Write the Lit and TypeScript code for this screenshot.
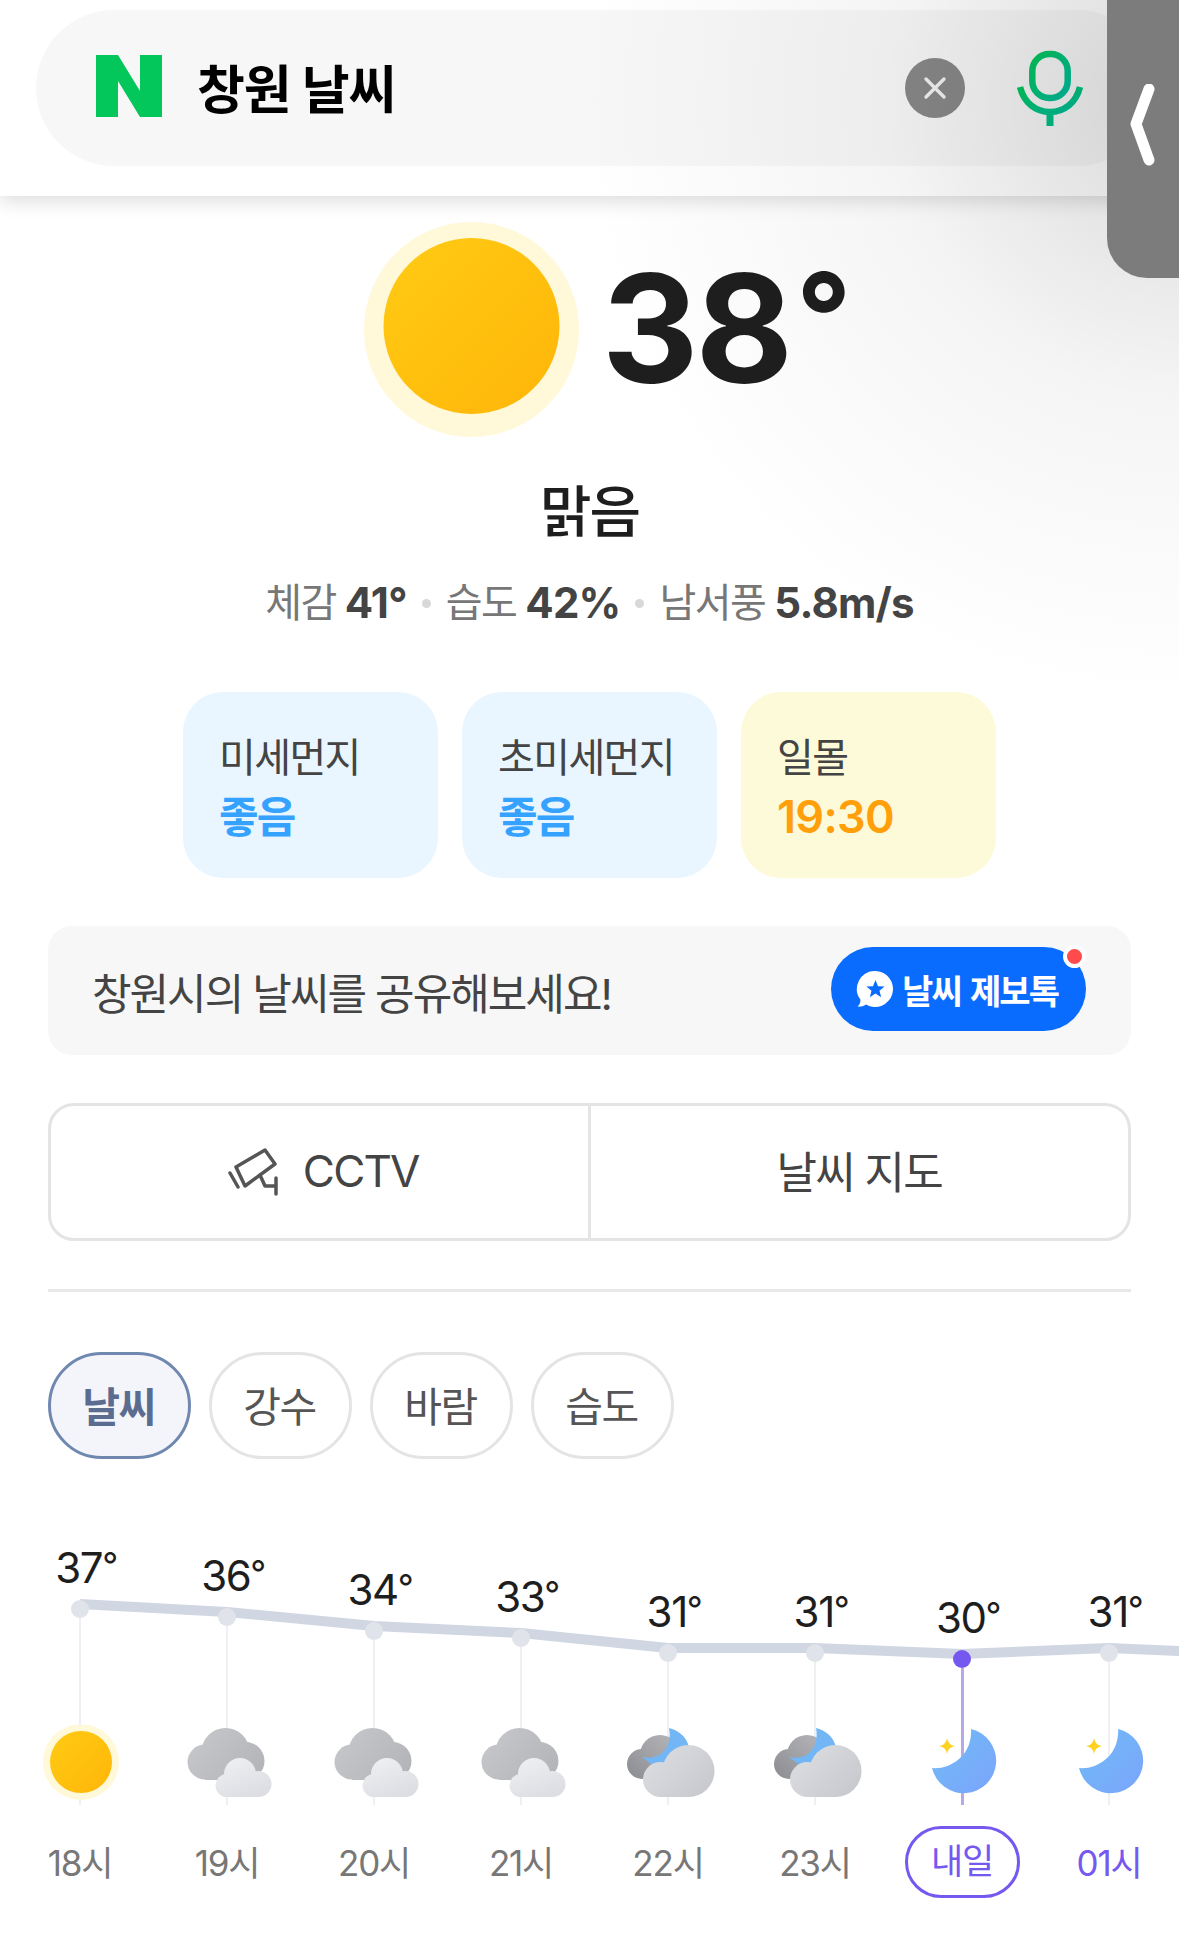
import { LitElement, html, svg, css } from 'lit';
import { customElement } from 'lit/decorators.js';

type Hour = { temp: string; y: number; icon: 'sun' | 'cloud' | 'cloudMoon' | 'moon'; label: string };

// y = centre of the dot from the top of the plot
const hours: Hour[] = [
  { temp: '37', y: 79, icon: 'sun', label: '18시' },
  { temp: '36', y: 87, icon: 'cloud', label: '19시' },
  { temp: '34', y: 101, icon: 'cloud', label: '20시' },
  { temp: '33', y: 108, icon: 'cloud', label: '21시' },
  { temp: '31', y: 123, icon: 'cloudMoon', label: '22시' },
  { temp: '31', y: 123, icon: 'cloudMoon', label: '23시' },
  { temp: '30', y: 129, icon: 'moon', label: '내일' },
  { temp: '31', y: 123, icon: 'moon', label: '01시' },
];

const COL = 147;
const FIRST = 80;

const defs = svg`
  <linearGradient id="gSun" x1="0" y1="0" x2="1" y2="1">
    <stop offset="0" stop-color="#ffcb14" /><stop offset="1" stop-color="#ffb508" />
  </linearGradient>
  <linearGradient id="gBig" gradientUnits="userSpaceOnUse" x1="-30" y1="5" x2="35" y2="55">
    <stop offset="0" stop-color="#c6c7ca" /><stop offset="1" stop-color="#b2b3b7" />
  </linearGradient>
  <linearGradient id="gSmall" gradientUnits="userSpaceOnUse" x1="5" y1="33" x2="20" y2="72">
    <stop offset="0" stop-color="#eeeff2" /><stop offset="1" stop-color="#dcdee3" />
  </linearGradient>
  <linearGradient id="gDark" gradientUnits="userSpaceOnUse" x1="5" y1="10" x2="-35" y2="54">
    <stop offset="0" stop-color="#b4b4b8" /><stop offset="1" stop-color="#8e8f94" />
  </linearGradient>
  <linearGradient id="gFront" gradientUnits="userSpaceOnUse" x1="-5" y1="25" x2="40" y2="70">
    <stop offset="0" stop-color="#dadbdf" /><stop offset="1" stop-color="#c7c8cd" />
  </linearGradient>
  <linearGradient id="gMoon" x1="0" y1="0" x2="1" y2="1">
    <stop offset="0" stop-color="#70bcf5" /><stop offset="1" stop-color="#7ba4fc" />
  </linearGradient>
  <linearGradient id="gMic" x1="0" y1="0" x2="1" y2="1">
    <stop offset="0" stop-color="#03c75a" /><stop offset="1" stop-color="#00bd9f" />
  </linearGradient>
`;

const iconParts = {
  sun: svg`
    <circle cx="1" cy="37" r="38" fill="#fff8d9" />
    <circle cx="1" cy="37" r="31" fill="url(#gSun)" />
  `,
  cloud: svg`
    <g fill="url(#gBig)">
      <circle cx="-22" cy="37" r="17.5" />
      <circle cx="-1.5" cy="27" r="24" />
      <circle cx="18.5" cy="36" r="19" />
      <rect x="-22" y="30" width="40" height="25" />
    </g>
    <g fill="url(#gSmall)">
      <circle cx="13" cy="49" r="16" />
      <circle cx="0" cy="60.5" r="11.5" />
      <circle cx="31.5" cy="59" r="13" />
      <rect x="0" y="58" width="32" height="14" />
    </g>
  `,
  cloudMoon: svg`
    <g fill="url(#gDark)">
      <circle cx="-26" cy="39" r="15" />
      <circle cx="-8" cy="30" r="20" />
    </g>
    <path d="M1 3C14 6 23 17 21 30L10 50L-10 44L-26 32C-10 36 5 25 1 3Z" fill="#72b6f6" />
    <g fill="url(#gFront)">
      <circle cx="-7.5" cy="54.5" r="17.5" />
      <circle cx="20.5" cy="46" r="26" />
      <rect x="-7.5" y="50" width="28" height="22" />
    </g>
  `,
  moon: svg`
    <path d="M9 4A32.5 32.5 0 1 1 -30 43A36 36 0 0 0 9 4Z" fill="url(#gMoon)" />
    <path d="M-15 13Q-14 20 -7 21Q-14 22 -15 29Q-16 22 -23 21Q-16 20 -15 13Z" fill="#ffd21f" />
  `,
};

@customElement('app-root')
export class AppRoot extends LitElement {
  static styles = css`
    :host {
      display: block;
      position: relative;
      height: 1952px;
      overflow: hidden;
      background: #fff;
      font-family: Inter, 'Noto Sans CJK KR', sans-serif;
      color: #1e1e1e;
    }
    .defs {
      position: absolute;
      width: 0;
      height: 0;
    }
    .dim {
      position: absolute;
      inset: 0;
      z-index: 5;
      pointer-events: none;
      background: radial-gradient(circle 600px at 100% 100px, rgba(0, 0, 0, 0.15), rgba(0, 0, 0, 0.04) 50%, rgba(0, 0, 0, 0) 100%);
    }
    .handle {
      position: absolute;
      top: 0;
      right: 0;
      width: 72px;
      height: 278px;
      z-index: 6;
      background: #7c7c7c;
      border-bottom-left-radius: 40px;
    }
    .handle svg {
      display: block;
      margin: 84px 0 0 21px;
    }
    header {
      position: relative;
      z-index: 2;
      height: 196px;
      box-sizing: border-box;
      padding: 10px 24px 30px 36px;
      background: #fff;
      box-shadow: 0 5px 18px rgba(0, 0, 0, 0.14);
    }
    .search {
      height: 156px;
      border-radius: 78px;
      background: #f7f7f7;
      display: flex;
      align-items: center;
      padding-left: 60px;
    }
    .logo {
      margin-bottom: 4px;
    }
    .search h1 {
      margin: 0 0 4px 35px;
      font-size: 52px;
      font-weight: 700;
      letter-spacing: -1.1px;
      color: #000;
      flex: 1;
    }
    .clear {
      width: 60px;
      height: 60px;
      border-radius: 50%;
      background: #888;
      display: flex;
      align-items: center;
      justify-content: center;
    }
    .mic {
      margin: 0 71px 0 51px;
      display: block;
    }
    .hero {
      display: flex;
      justify-content: center;
      padding: 26px 0 0 33px;
      gap: 23px;
      height: 215px;
    }
    .big {
      font-size: 150px;
      line-height: 1;
      font-weight: 700;
      letter-spacing: -3px;
      margin-top: 32px;
      height: 150px;
    }
    .big span {
      font-size: 120px;
      line-height: 0;
      vertical-align: 24px;
      margin-left: 6px;
    }
    .status {
      margin-top: 40px;
      text-align: center;
      font-size: 56px;
      line-height: 70px;
      font-weight: 500;
      letter-spacing: -2px;
    }
    .facts {
      margin-top: 26px;
      display: flex;
      justify-content: center;
      align-items: center;
      font-size: 40px;
      line-height: 60px;
      color: #777;
      letter-spacing: -1.5px;
    }
    .facts b {
      color: #444;
      font-size: 42px;
      font-weight: 700;
      margin-left: 9px;
      letter-spacing: -0.8px;
    }
    .facts i {
      width: 9px;
      height: 9px;
      border-radius: 50%;
      background: #d8d8d8;
      margin: 0 15px;
    }
    .cards {
      margin-top: 59px;
      display: flex;
      justify-content: center;
      gap: 24px;
    }
    .card {
      width: 255px;
      height: 186px;
      box-sizing: border-box;
      padding: 41px 0 0 36px;
      border-radius: 40px;
      background: #e9f6ff;
      font-size: 40px;
      line-height: 50px;
      letter-spacing: -1.6px;
      color: #444;
    }
    .card.warm {
      background: #fdfad9;
    }
    .card b {
      display: block;
      margin-top: 9px;
      font-size: 43px;
      font-weight: 600;
      color: #36a2ff;
      letter-spacing: -1.8px;
    }
    .card.warm b {
      color: #ff9f0a;
      font-size: 45px;
      letter-spacing: -0.7px;
    }
    .banner {
      position: relative;
      margin: 48px 48px 0;
      height: 129px;
      box-sizing: border-box;
      padding: 0 45px 0 44px;
      border-radius: 24px;
      background: #f7f7f7;
      display: flex;
      align-items: center;
      justify-content: space-between;
      font-size: 43px;
      letter-spacing: -2px;
      color: #444;
    }
    .report {
      position: relative;
      width: 255px;
      height: 84px;
      margin-bottom: 3px;
      border-radius: 42px;
      background: #0a6cff;
      display: flex;
      align-items: center;
      box-sizing: border-box;
      padding-left: 25px;
      gap: 8px;
      font-size: 34px;
      font-weight: 700;
      letter-spacing: -1.9px;
      word-spacing: 3px;
      color: #fff;
    }
    .report::after {
      content: '';
      position: absolute;
      top: -2px;
      right: 0;
      width: 15px;
      height: 15px;
      border-radius: 50%;
      background: #ff4b4b;
      border: 4.5px solid #fdfdfd;
    }
    .links {
      margin: 48px 48px 0;
      height: 138px;
      box-sizing: border-box;
      border: 3px solid #e4e4e4;
      border-radius: 26px;
      display: grid;
      grid-template-columns: calc(50% + 1px) 1fr;
      font-size: 44px;
      letter-spacing: -1.8px;
      color: #444;
    }
    .links div {
      display: flex;
      align-items: center;
      justify-content: center;
      gap: 24px;
      padding-bottom: 4px;
    }
    .links div:first-child {
      border-right: 3px solid #e4e4e4;
      padding: 0 0 2px 5px;
    }
    .rule {
      margin: 48px 48px 0;
      height: 3px;
      background: #e8e8e8;
    }
    .tabs {
      margin: 60px 0 0 48px;
      display: flex;
      gap: 18px;
    }
    .tab {
      width: 143px;
      height: 107px;
      box-sizing: border-box;
      border: 3px solid #e4e4e4;
      border-radius: 54px;
      padding: 0 2px 3px 0;
      display: flex;
      align-items: center;
      justify-content: center;
      font-size: 41px;
      letter-spacing: -1.5px;
      color: #555;
    }
    .tab.on {
      border-color: #7088b0;
      background: #f3f5fa;
      color: #5a6c8f;
      font-weight: 700;
    }
    .plot {
      position: relative;
      margin-top: 71px;
      height: 275px;
    }
    .line {
      position: absolute;
      left: 0;
      top: 0;
    }
    .cols,
    .labels {
      position: relative;
      display: flex;
      padding-left: 6.5px;
      width: 1300px;
    }
    .cols {
      height: 275px;
    }
    .col {
      position: relative;
      width: 147px;
      flex: none;
      display: flex;
      flex-direction: column;
      align-items: center;
    }
    .temp {
      height: 50px;
      line-height: 50px;
      padding-left: 12px;
      font-size: 42px;
      letter-spacing: -1.4px;
      white-space: nowrap;
    }
    .temp span {
      font-size: 35px;
      line-height: 0;
      vertical-align: 5px;
    }
    .dot {
      width: 18px;
      height: 18px;
      margin-top: 7px;
      flex: none;
      border-radius: 50%;
      background: #e0e3ea;
    }
    .stem {
      width: 2px;
      flex: 1;
      background: #f0f0f4;
    }
    .col.now .dot {
      background: #7558f0;
    }
    .col.now .stem {
      width: 3px;
      background: #b8a8ea;
    }
    .wx {
      position: absolute;
      left: 13.5px;
      bottom: 0;
      display: block;
    }
    .labels {
      margin-top: 21px;
      height: 72px;
    }
    .label {
      width: 147px;
      flex: none;
      display: flex;
      align-items: center;
      justify-content: center;
      padding-bottom: 3px;
      font-size: 35px;
      letter-spacing: -1.2px;
      color: #777;
    }
    .label span {
      display: block;
    }
    .label.pill {
      padding-bottom: 0;
    }
    .label.pill span {
      width: 115px;
      height: 72px;
      box-sizing: border-box;
      border: 3px solid #7558f0;
      border-radius: 36px;
      line-height: 64px;
      text-align: center;
      color: #7558f0;
    }
    .label.next {
      color: #7558f0;
    }
  `;

  private linePoints() {
    const pts = hours.map((h, i) => `${FIRST + COL * i},${h.y - 5}`);
    pts.push('1179,121', '1200,122');
    return pts.join(' ');
  }

  render() {
    return html`
      <svg class="defs">${defs}</svg>
      <div class="dim"></div>
      <div class="handle">
        <svg width="30" height="84" viewBox="0 0 30 84">
          <path d="M21 5L8 40L21 76" fill="none" stroke="#fff" stroke-width="11" stroke-linecap="round" stroke-linejoin="round" />
        </svg>
      </div>

      <header>
        <div class="search">
          <svg class="logo" width="66" height="62" viewBox="0 0 66 62">
            <path d="M0 0H22L44 36V0H66V62H44L22 26V62H0Z" fill="#03c75a" />
          </svg>
          <h1>창원 날씨</h1>
          <div class="clear">
            <svg width="24" height="24" viewBox="0 0 24 24">
              <path d="M3 3L21 21M21 3L3 21" stroke="#f2f2f2" stroke-width="3.4" stroke-linecap="round" />
            </svg>
          </div>
          <svg class="mic" width="68" height="76" viewBox="0 0 68 76">
            <rect x="16.3" y="4" width="35.4" height="44" rx="17" fill="none" stroke="url(#gMic)" stroke-width="6.5" />
            <path d="M4 37C8 53 20 62 34 62C48 62 60 53 64 37" fill="none" stroke="url(#gMic)" stroke-width="6.5" />
            <rect x="30.5" y="62" width="7" height="14" fill="#00bf84" />
          </svg>
        </div>
      </header>

      <div class="hero">
        <svg width="215" height="215" viewBox="0 0 215 215">
          <circle cx="107.5" cy="107.5" r="107.5" fill="#fff8d9" />
          <circle cx="107.5" cy="104" r="88" fill="url(#gSun)" />
        </svg>
        <div class="big">38<span>°</span></div>
      </div>
      <div class="status">맑음</div>
      <div class="facts">
        체감<b>41°</b><i></i>습도<b>42%</b><i></i>남서풍<b>5.8m/s</b>
      </div>

      <div class="cards">
        <div class="card">미세먼지<b>좋음</b></div>
        <div class="card">초미세먼지<b>좋음</b></div>
        <div class="card warm">일몰<b>19:30</b></div>
      </div>

      <div class="banner">
        <span>창원시의 날씨를 공유해보세요!</span>
        <div class="report">
          <svg width="38" height="38" viewBox="0 0 38 38">
            <path d="M19 1A18 18 0 1 1 10 34.6C7 36.6 4 37 1.5 36.6C3.5 35 4.6 33 4.4 29.6A18 18 0 0 1 19 1Z" fill="#fff" />
            <path d="M19.5 10L22 16.2L28.6 16.6L23.5 20.8L25.2 27.2L19.5 23.6L13.8 27.2L15.5 20.8L10.4 16.6L17 16.2Z" fill="#0a6cff" />
          </svg>
          날씨 제보톡
        </div>
      </div>

      <div class="links">
        <div>
          <svg width="54" height="52" viewBox="0 0 54 52" fill="none" stroke="#555" stroke-width="3.5" stroke-linejoin="round" stroke-linecap="round">
            <path d="M11 22L40 5L50 19L20 41Z" />
            <path d="M5 28L13 42M35 30L40 41H50M51 33V49" />
          </svg>
          CCTV
        </div>
        <div>날씨 지도</div>
      </div>

      <div class="rule"></div>

      <div class="tabs">
        <div class="tab on">날씨</div>
        <div class="tab">강수</div>
        <div class="tab">바람</div>
        <div class="tab">습도</div>
      </div>

      <div class="plot">
        <svg class="line" width="1179" height="275">
          <polyline points=${this.linePoints()} fill="none" stroke="#d0d6e2" stroke-width="10" stroke-linejoin="round" />
        </svg>
        <div class="cols">
          ${hours.map((h, i) => html`
            <div class="col ${i === 6 ? 'now' : ''}" style="padding-top:${h.y - 66}px">
              <div class="temp">${h.temp}<span>°</span></div>
              <div class="dot"></div>
              <div class="stem"></div>
              <svg class="wx" width="120" height="80" viewBox="-60 0 120 80">${iconParts[h.icon]}</svg>
            </div>
          `)}
        </div>
      </div>
      <div class="labels">
        ${hours.map((h, i) => html`
          <div class="label ${i === 6 ? 'pill' : ''} ${i === 7 ? 'next' : ''}"><span>${h.label}</span></div>
        `)}
      </div>
    `;
  }
}
